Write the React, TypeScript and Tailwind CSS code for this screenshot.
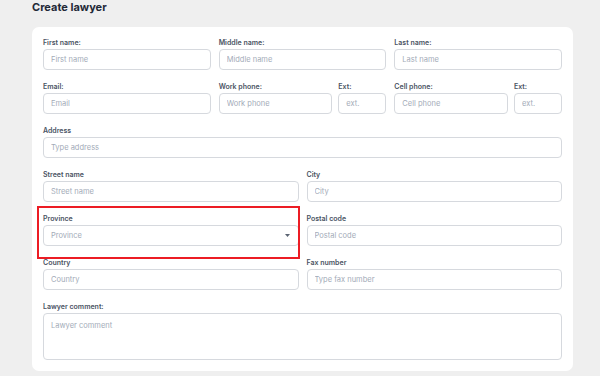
const label = "block text-[7px] leading-[10px] mb-[1px] font-semibold text-[#4a5363]";
const input =
  "w-full h-[21px] rounded-[4px] border border-[#d6d9de] bg-white px-[7px] text-[7.5px] text-[#374151] placeholder:text-[#a3abb8] outline-none";

function Field({ name, placeholder, className = "" }: { name: string; placeholder: string; className?: string }) {
  return (
    <div className={`flex flex-col ${className}`}>
      <label className={label}>{name}</label>
      <input className={input} placeholder={placeholder} />
    </div>
  );
}

export default function App() {
  return (
    <div
      className="w-[600px] h-[376px] overflow-hidden bg-[#efefef] pl-[32px] pr-[27px]"
      style={{ fontFamily: "Inter, 'Liberation Sans', sans-serif" }}
    >
      <h1 className="text-[11px] leading-[14px] font-bold text-[#1f2937] mb-[13px]">Create lawyer</h1>

      <div className="bg-white rounded-[7px] px-[11px] pt-[11px] pb-[11px] flex flex-col gap-[12px]">
        {/* names */}
        <div className="grid grid-cols-3 gap-[8px]">
          <Field name="First name:" placeholder="First name" />
          <Field name="Middle name:" placeholder="Middle name" />
          <Field name="Last name:" placeholder="Last name" />
        </div>

        {/* contact */}
        <div className="grid grid-cols-3 gap-[8px]">
          <Field name="Email:" placeholder="Email" />
          <div className="flex gap-[6px]">
            <Field name="Work phone:" placeholder="Work phone" className="flex-1" />
            <Field name="Ext:" placeholder="ext." className="w-[48px]" />
          </div>
          <div className="flex gap-[6px]">
            <Field name="Cell phone:" placeholder="Cell phone" className="flex-1" />
            <Field name="Ext:" placeholder="ext." className="w-[48px]" />
          </div>
        </div>

        <Field name="Address" placeholder="Type address" />

        <div className="grid grid-cols-2 gap-[8px]">
          <Field name="Street name" placeholder="Street name" />
          <Field name="City" placeholder="City" />
        </div>

        <div className="grid grid-cols-2 gap-[8px]">
          <div className="relative flex flex-col">
            <label className={label}>Province</label>
            <div className={`${input} flex items-center justify-between`}>
              <span className="text-[#a3abb8]">Province</span>
              <svg width="5" height="3" viewBox="0 0 5 3" className="mr-[1px]">
                <path d="M0 0h5L2.5 3z" fill="#5b6472" />
              </svg>
            </div>
            {/* highlight box */}
            <div className="absolute left-[-6.5px] right-[-1.5px] top-[-8px] bottom-[-12.5px] border-2 border-[#ec1c24] pointer-events-none" />
          </div>
          <Field name="Postal code" placeholder="Postal code" />
        </div>

        <div className="grid grid-cols-2 gap-[8px]">
          <Field name="Country" placeholder="Country" />
          <Field name="Fax number" placeholder="Type fax number" />
        </div>

        <div className="flex flex-col">
          <label className={label}>Lawyer comment:</label>
          <textarea
            className="w-full h-[47px] resize-none rounded-[4px] border border-[#d6d9de] bg-white px-[7px] py-[7px] text-[7.5px] leading-[10px] text-[#374151] placeholder:text-[#a3abb8] outline-none"
            placeholder="Lawyer comment"
          />
        </div>
      </div>
    </div>
  );
}
